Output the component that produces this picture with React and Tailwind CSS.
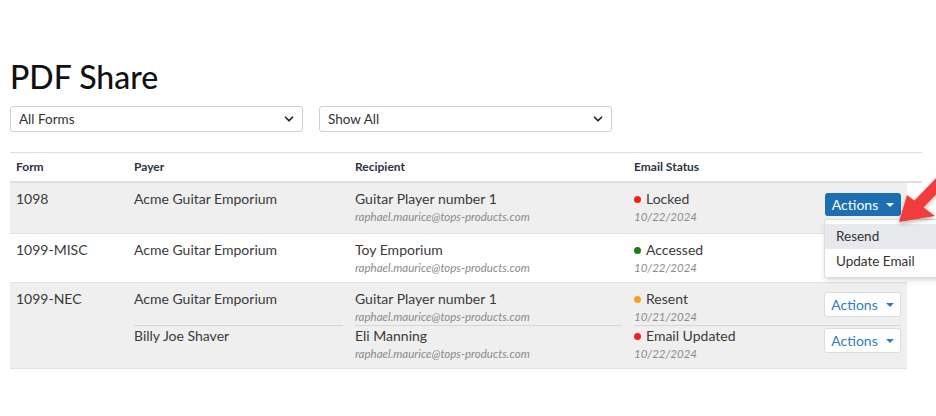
import { ChevronDown } from "lucide-react";

const font = { fontFamily: "Lato, 'Noto Sans', sans-serif" };

function Dot({ color }) {
  return <span className={`inline-block w-[7px] h-[7px] rounded-full mr-[5px] ${color}`} />;
}

function Caret() {
  return <span className="inline-block w-0 h-0 border-l-[4px] border-r-[4px] border-t-[4px] border-l-transparent border-r-transparent border-t-current" />;
}

function Select({ label }) {
  return (
    <div className="w-[293px] h-[26px] border border-[#cfcfcf] rounded-[3px] flex items-center justify-between pl-[8px] pr-[6px] bg-white">
      <span className="text-[13.5px] text-[#333]">{label}</span>
      <ChevronDown size={14} strokeWidth={3} className="text-[#222]" />
    </div>
  );
}

function Person({ name, email }) {
  return (
    <div>
      <div className="text-[14px] leading-[20px] text-[#3a3a3a]">{name}</div>
      <div className="text-[11.5px] leading-[16px] italic text-[#8a8a8a]">{email}</div>
    </div>
  );
}

function Status({ dot, label, date }) {
  return (
    <div>
      <div className="text-[14px] leading-[20px] text-[#3a3a3a] flex items-center">
        <Dot color={dot} />
        {label}
      </div>
      <div className="text-[11.5px] leading-[16px] italic text-[#8a8a8a]">{date}</div>
    </div>
  );
}

function ActionsBtn({ primary }) {
  return primary ? (
    <div className="w-[76px] h-[23px] rounded-[3px] bg-[#1c6fb3] text-white text-[14px] flex items-center justify-center gap-[8px]">
      Actions <Caret />
    </div>
  ) : (
    <div className="w-[77px] h-[25px] rounded-[3px] bg-white border border-[#dcdcdc] text-[#2f7dbd] text-[14px] flex items-center justify-center gap-[8px]">
      Actions <Caret />
    </div>
  );
}

const email = "raphael.maurice@tops-products.com";

export default function App() {
  return (
    <div className="relative w-[936px] h-[416px] overflow-hidden bg-white" style={font}>
      <div className="pl-[10px] pt-[57px]">
        <h1 className="text-[32px] leading-[40px] text-[#111] font-medium">PDF Share</h1>
        <div className="flex gap-[16px] mt-[9px]">
          <Select label="All Forms" />
          <Select label="Show All" />
        </div>

        <div className="mt-[20px] w-[912px] border-t border-[#dedede]">
          {/* Header */}
          <div className="flex h-[30px] items-center border-b-2 border-[#dedede] text-[12px] font-bold text-[#2d3340]">
            <div className="w-[118px] pl-[6px]">Form</div>
            <div className="w-[221px] pl-[6px]">Payer</div>
            <div className="w-[279px] pl-[6px]">Recipient</div>
            <div className="pl-[6px]">Email Status</div>
          </div>

          <div className="w-[897px]">
            {/* Row 1 */}
            <div className="flex bg-[#efefef] border-b border-[#e2e2e2] pt-[6px] pb-[8px] text-[14px] text-[#3a3a3a]">
              <div className="w-[118px] pl-[6px] leading-[20px]">1098</div>
              <div className="w-[221px] pl-[6px] leading-[20px]">Acme Guitar Emporium</div>
              <div className="w-[279px] pl-[6px]">
                <Person name="Guitar Player number 1" email={email} />
              </div>
              <div className="flex-1 pl-[6px] pr-[6px] flex justify-between">
                <Status dot="bg-[#ff1a1a]" label="Locked" date="10/22/2024" />
                <div className="relative pt-[4px]">
                  <ActionsBtn primary />
                  <div className="absolute left-[-1px] top-[30px] w-[130px] bg-white border border-[#dcdcdc] rounded-[3px] shadow-md py-[4px] z-10">
                    <div className="bg-[#e7e9ec] px-[11px] h-[25px] flex items-center text-[13.5px] text-[#333]">Resend</div>
                    <div className="px-[11px] h-[24px] flex items-center text-[13.5px] text-[#333]">Update Email</div>
                  </div>
                </div>
              </div>
            </div>

            {/* Row 2 */}
            <div className="flex bg-white border-b border-[#e2e2e2] pt-[6px] pb-[6px] text-[14px] text-[#3a3a3a]">
              <div className="w-[118px] pl-[6px] leading-[20px]">1099-MISC</div>
              <div className="w-[221px] pl-[6px] leading-[20px]">Acme Guitar Emporium</div>
              <div className="w-[279px] pl-[6px]">
                <Person name="Toy Emporium" email={email} />
              </div>
              <div className="flex-1 pl-[6px]">
                <Status dot="bg-[#1e7a1e]" label="Accessed" date="10/22/2024" />
              </div>
            </div>

            {/* Row 3 */}
            <div className="flex bg-[#efefef] border-b border-[#e2e2e2] pt-[6px] pb-[6px] text-[14px] text-[#3a3a3a]">
              <div className="w-[118px] pl-[6px] leading-[20px]">1099-NEC</div>
              <div className="w-[221px] px-[6px]">
                <div className="h-[37px] border-b border-[#d6d6d6] leading-[20px]">Acme Guitar Emporium</div>
                <div className="h-[36px] leading-[20px]">Billy Joe Shaver</div>
              </div>
              <div className="w-[279px] px-[6px]">
                <div className="h-[37px] border-b border-[#d6d6d6]">
                  <Person name="Guitar Player number 1" email={email} />
                </div>
                <div className="h-[36px]">
                  <Person name="Eli Manning" email={email} />
                </div>
              </div>
              <div className="flex-1 pl-[6px] pr-[6px]">
                <div className="h-[37px] border-b border-[#d6d6d6] flex justify-between">
                  <Status dot="bg-[#f7a21d]" label="Resent" date="10/21/2024" />
                  <div className="pt-[3px]">
                    <ActionsBtn />
                  </div>
                </div>
                <div className="h-[36px] flex justify-between">
                  <Status dot="bg-[#ff1a1a]" label="Email Updated" date="10/22/2024" />
                  <div className="pt-[2px]">
                    <ActionsBtn />
                  </div>
                </div>
              </div>
            </div>
          </div>
        </div>
      </div>

      {/* Annotation arrow */}
      <svg className="absolute left-0 top-0 pointer-events-none z-20" width="936" height="416" viewBox="0 0 936 416">
        <defs>
          <filter id="sh" x="-20%" y="-20%" width="140%" height="140%">
            <feDropShadow dx="0" dy="2" stdDeviation="2" floodColor="#000" floodOpacity="0.3" />
          </filter>
        </defs>
        <g filter="url(#sh)" fill="#f23b3b">
          <polygon points="942,172 950,180 922,209 914,201" />
          <polygon points="899,222 907,195 935,216" />
        </g>
      </svg>
    </div>
  );
}
